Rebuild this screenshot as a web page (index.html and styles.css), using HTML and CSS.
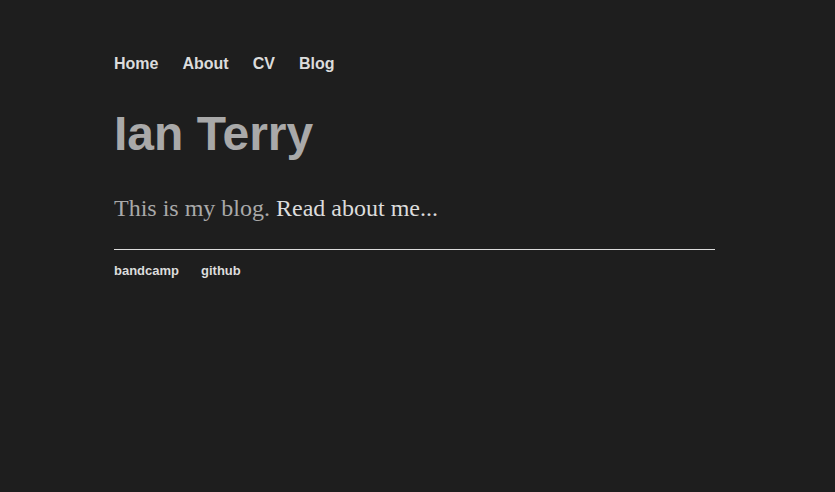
FILE: index.html
```html
<!DOCTYPE html>
<html>
<head>
<meta charset="utf-8">
<link rel="stylesheet" href="styles.css">
</head>
<body>
<div class="page">
  <nav class="nav">
    <a href="#">Home</a>
    <a href="#">About</a>
    <a href="#">CV</a>
    <a href="#">Blog</a>
  </nav>
  <h1 class="title">Ian Terry</h1>
  <p class="intro">This is my blog. <a href="#">Read about me...</a></p>
  <hr class="rule">
  <footer class="footer">
    <a href="#">bandcamp</a>
    <a href="#">github</a>
  </footer>
</div>
</body>
</html>
```
FILE: styles.css
```css
html, body {
  margin: 0;
  background: #1e1e1e;
}
.page {
  width: 601px;
  padding: 53px 0 0 114px;
  font-family: "Liberation Sans", Arial, sans-serif;
}
a {
  text-decoration: none;
}
.nav {
  display: flex;
  gap: 24px;
  font-size: 16px;
  font-weight: bold;
  line-height: 22px;
}
.nav a {
  color: #dcdcdc;
}
.title {
  margin: 31px 0 0;
  font-size: 48px;
  line-height: 56px;
  font-weight: bold;
  color: #a9a9a9;
}
.intro {
  margin: 32px 0 0;
  font-family: "Liberation Serif", "Times New Roman", serif;
  font-size: 24px;
  line-height: 28px;
  color: #a9a9a9;
}
.intro a {
  color: #dcdcdc;
}
.rule {
  margin: 27px 0 0;
  border: 0;
  height: 1px;
  background: #dcdcdc;
}
.footer {
  display: flex;
  gap: 22px;
  margin-top: 13px;
  font-size: 13px;
  font-weight: bold;
  line-height: 16px;
}
.footer a {
  color: #dcdcdc;
}
```
